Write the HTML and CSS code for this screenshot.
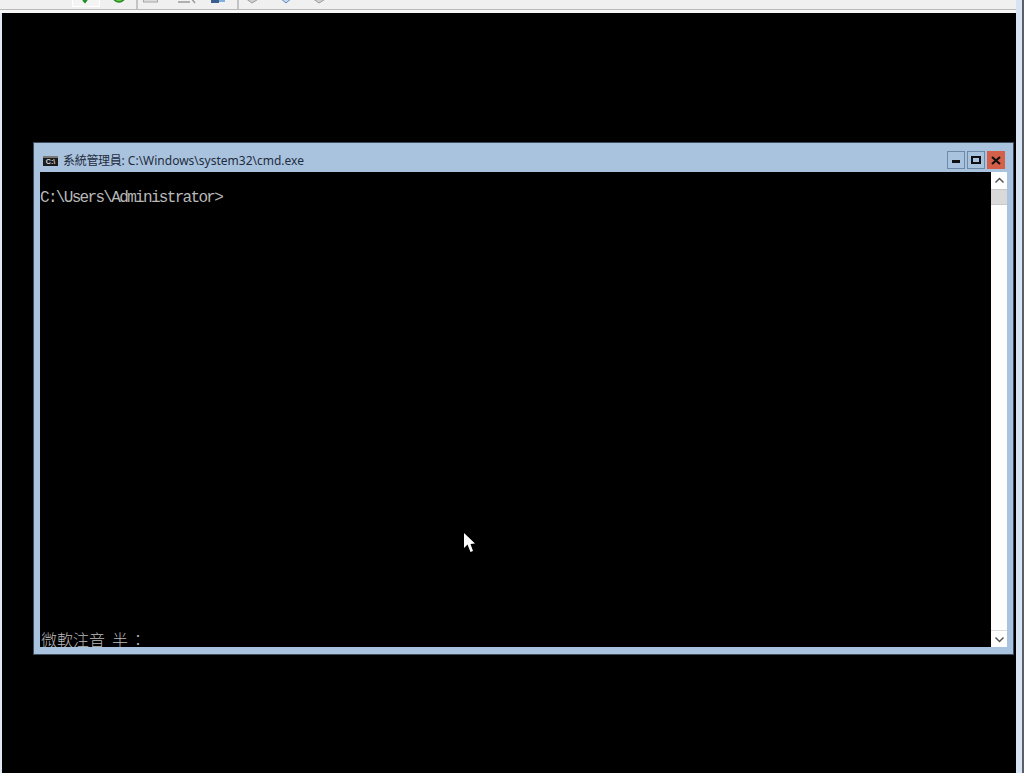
FILE: index.html
```html
<!DOCTYPE html>
<html lang="zh-Hant">
<head>
<meta charset="utf-8">
<title>cmd.exe</title>
<link rel="stylesheet" href="styles.css">
</head>
<body>
<div class="shell">
  <main class="main">
    <div class="toolbar">
      <div class="tools">
        <span class="gap-a"></span>
        <div class="toggled">
          <svg width="26" height="7" viewBox="0 0 26 7"><path d="M10 0 L12 2 L15 -2" fill="none" stroke="#1f8a1f" stroke-width="2"/></svg>
        </div>
        <svg class="tool-wide" width="36" height="9" viewBox="0 0 36 9"><path d="M13 -4 A6 6 0 0 0 25 -4 A6 6 0 0 0 13 -4 Z" fill="#6cc24a" stroke="#1f8a1f" stroke-width="1.5"/></svg>
        <i class="sep"></i>
        <svg class="tool" width="35" height="9" viewBox="0 0 35 9"><rect x="5.5" y="-3" width="14" height="5" fill="#dcdcdc" stroke="#a8a8a8"/></svg>
        <svg class="tool" width="33" height="9" viewBox="0 0 33 9"><path d="M5 2 H17 M18 -2 L22 3" fill="none" stroke="#9a9a9a" stroke-width="1.5"/></svg>
        <svg class="tool" width="31" height="9" viewBox="0 0 31 9"><rect x="5" y="-2" width="8" height="5" fill="#3b5f8f"/><rect x="13" y="-1" width="6" height="3" fill="#7fb0e0"/></svg>
        <i class="sep"></i>
        <svg class="tool" width="35" height="9" viewBox="0 0 35 9"><path d="M6 -2 L13 3 L21 -2" fill="#d0d0d0" stroke="#9a9a9a"/></svg>
        <svg class="tool" width="32" height="9" viewBox="0 0 32 9"><path d="M6 -2 L12 3 L18 -2" fill="#c4d8ee" stroke="#5f8ab5"/></svg>
        <svg class="tool" width="32" height="9" viewBox="0 0 32 9"><path d="M6 -2 L13 3 L21 -2" fill="#d0d0d0" stroke="#9a9a9a"/></svg>
      </div>
    </div>
    <div class="desktop">
      <section class="window">
        <header class="titlebar">
          <div class="app-icon">C:\</div>
          <div class="title"><span class="title-cjk">系統管理員</span>: C:\Windows\system32\cmd.exe</div>
          <div class="controls">
            <button class="ctl"><svg width="10" height="8" viewBox="0 0 10 8"><rect x="1" y="4" width="8" height="3" fill="#111"/></svg></button>
            <button class="ctl"><svg width="10" height="8" viewBox="0 0 10 8"><rect x="1" y="1" width="8" height="6" fill="none" stroke="#111" stroke-width="2"/></svg></button>
            <button class="ctl close"><svg width="10" height="9" viewBox="0 0 10 9"><path d="M1 1 L9 8 M9 1 L1 8" stroke="#111" stroke-width="2.2"/></svg></button>
          </div>
        </header>
        <div class="client">
          <div class="console">
            <div class="prompt">C:\Users\Administrator&gt;</div>
            <div class="ime"><span>微軟注音</span><span class="ime-mode">半</span><span class="ime-colon">：</span></div>
          </div>
          <div class="scrollbar">
            <div class="arrow"><svg width="11" height="7" viewBox="0 0 11 7"><path d="M1.5 5.5 L5.5 1.5 L9.5 5.5" fill="none" stroke="#555" stroke-width="1.5"/></svg></div>
            <div class="thumb"></div>
            <div class="track"></div>
            <div class="arrow arrow-down"><svg width="11" height="7" viewBox="0 0 11 7"><path d="M1.5 1.5 L5.5 5.5 L9.5 1.5" fill="none" stroke="#555" stroke-width="1.5"/></svg></div>
          </div>
        </div>
      </section>
      <svg class="cursor" width="13" height="22" viewBox="0 0 13 22"><path d="M1 1 V16 L4.5 12.5 L7.5 20 L10 19 L7.5 12 L12 11.5 Z" fill="#fff"/></svg>
    </div>
  </main>
  <div class="edge"></div>
</div>
</body>
</html>
```
FILE: styles.css
```css
* { box-sizing: border-box; }
html, body { margin: 0; height: 100%; overflow: hidden; }
body { font-family: "Liberation Sans", "Noto Sans CJK TC", sans-serif; background: #000; }
.shell { display: flex; width: 1024px; height: 773px; }
.main { width: 1016px; display: flex; flex-direction: column; }
.edge { width: 8px; background: #d6e4f3; border-right: 2px solid #5b6068; }
.toolbar { height: 13px; background: #f0f0f0; border-bottom: 3px solid #f7f7f7; box-shadow: inset 0 -1px 0 #b9b9b9; overflow: hidden; flex: none; }
.tools { display: flex; height: 9px; align-items: flex-start; }
.gap-a { width: 72px; }
.toggled { width: 28px; height: 7px; border: 1px solid #fff; border-top: 0; background: #f4f4f4; }
.toggled svg { display: block; }
.tool-wide { width: 36px; flex: none; }
.sep { width: 2px; height: 9px; background: #c4c4c4; flex: none; }
.tool { flex: none; }
.desktop { position: relative; flex: 1; background: #000; border-left: 2px solid #dfe8f3; }
.window { position: absolute; left: 31px; top: 129px; width: 981px; height: 513px; background: #a9c3df; border: 1px solid #3c4c5c; display: flex; flex-direction: column; padding: 0 6px 7px 6px; }
.titlebar { height: 29px; display: flex; align-items: center; flex: none; padding-top: 7px; }
.app-icon { width: 15px; height: 10px; margin-left: 3px; background: #1c1c1c; border-top: 2px solid #777; color: #ddd; font: bold 7px/8px "Liberation Sans", sans-serif; text-align: center; overflow: hidden; }
.title { margin-left: 5px; font-family: "Noto Sans", "Noto Sans CJK TC", sans-serif; font-size: 12px; line-height: 16px; color: #1f2d3d; white-space: nowrap; flex: 1; }
.title-cjk { letter-spacing: -0.3px; }
.controls { display: flex; gap: 2px; margin-top: -2px; margin-right: 2px; align-self: center; }
.ctl { width: 18px; height: 18px; padding: 0; margin: 0; background: #a9c3df; border: 1px solid #6d8aa8; display: flex; align-items: center; justify-content: center; }
.close { background: #d5604a; border-color: #d5604a; }
.client { flex: 1; display: flex; min-height: 0; }
.console { flex: 1; background: #000; color: #b8b8b8; position: relative; display: flex; flex-direction: column; justify-content: space-between; min-width: 0; }
.prompt { font-family: "Liberation Mono", monospace; font-size: 16px; letter-spacing: -1.68px; line-height: 18px; margin-top: 17px; white-space: nowrap; }
.ime { font-family: "Noto Sans CJK TC", sans-serif; font-weight: 300; font-size: 16px; line-height: 16px; padding-left: 1px; color: #bdbdbd; display: flex; height: 16px; opacity: 0.99; }
.ime-mode { margin-left: 7px; }
.ime-colon { margin-left: 2px; }
.scrollbar { width: 16px; background: #fdfdfd; display: flex; flex-direction: column; flex: none; }
.arrow { height: 17px; display: flex; align-items: center; justify-content: center; background: #fff; }
.arrow-down { border-top: 1px solid #dcdcdc; }
.thumb { height: 16px; background: #d9d9d9; border: 1px solid #c8c8c8; border-width: 1px 0; }
.track { flex: 1; }
.cursor { position: absolute; left: 461px; top: 519px; }
```
